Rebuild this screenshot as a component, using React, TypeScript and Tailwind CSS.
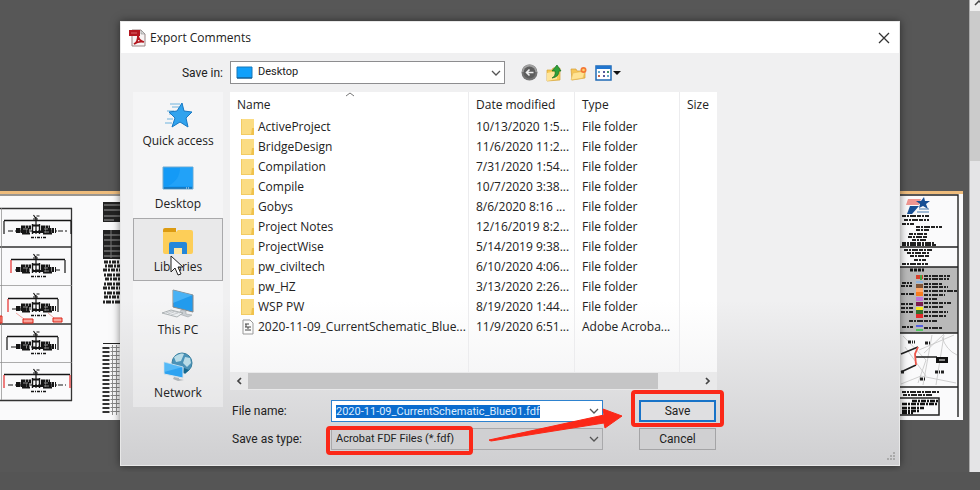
import { useEffect, useRef, useState } from "react";

const folders = [
  { name: "ActiveProject", date: "10/13/2020 1:5..." },
  { name: "BridgeDesign", date: "11/6/2020 11:2..." },
  { name: "Compilation", date: "7/31/2020 1:54..." },
  { name: "Compile", date: "10/7/2020 3:38..." },
  { name: "Gobys", date: "8/6/2020 8:16 ..." },
  { name: "Project Notes", date: "12/16/2019 8:2..." },
  { name: "ProjectWise", date: "5/14/2019 9:38..." },
  { name: "pw_civiltech", date: "6/10/2020 4:06..." },
  { name: "pw_HZ", date: "3/13/2020 2:26..." },
  { name: "WSP PW", date: "8/19/2020 1:44..." },
];

const places = [
  { name: "Quick access", icon: <QuickAccessIcon /> },
  { name: "Desktop", icon: <DesktopIcon /> },
  { name: "Libraries", icon: <LibrariesIcon /> },
  { name: "This PC", icon: <ThisPcIcon /> },
  { name: "Network", icon: <NetworkIcon /> },
];

function PdfIcon() {
  return (
    <svg width="18" height="18" viewBox="0 0 18 18" aria-hidden="true">
      <path d="M3 1h9l4 4v12H3z" fill="#f8f4f4" stroke="#9a8585" />
      <path d="M12 1v4h4z" fill="#d8d8d8" stroke="#8d8d8d" strokeWidth=".6" />
      <path d="M0 1h11v6H0z" fill="#b3171f" />
      <path d="M2 4h6" stroke="#d9696d" />
      <path d="M5 15c3-1 4-5 4-9 0 4 2 6 6 7-4-1-7 0-10 2z" fill="none" stroke="#b3171f" strokeWidth="1.8" />
    </svg>
  );
}

function QuickAccessIcon() {
  return (
    <svg width="30" height="28" viewBox="0 0 30 28" aria-hidden="true">
      <path d="M7 3h10M9 6h7M4 10h7M6 13h6M4 18h6M2 22h7" stroke="#6fb3de" strokeWidth="1" />
      <path d="M19 2l2 8 8 1-6 6 2 9-8-5-8 5 3-9-6-6 8-1z" fill="#31a3ee" stroke="#1678c4" strokeWidth="1" />
    </svg>
  );
}

function DesktopIcon() {
  return (
    <svg width="32" height="24" viewBox="0 0 32 24" aria-hidden="true">
      <path d="M1 1h30v22H1z" fill="#149af6" stroke="#70a9cf" />
      <path d="M18 1h13v19H6c8-4 12-10 12-19z" fill="#30aafa" opacity=".5" />
      <path d="M2 22h28" stroke="#155a91" />
      <path d="M24 22h4" stroke="#d7ebf8" strokeDasharray="1 1" />
    </svg>
  );
}

function LibrariesIcon() {
  return (
    <svg width="32" height="28" viewBox="0 0 32 28" aria-hidden="true">
      <path d="M1 3q0-2 2-2h11v5H1z" fill="#dc9b12" />
      <path d="M1 5h13l2-2h13q2 0 2 2v20q0 2-2 2H3q-2 0-2-2z" fill="#fdce58" />
      <path d="M7 27V17q0-2 2-2h14q2 0 2 2v10h-5v-6h-8v6z" fill="#2587da" />
      <path d="M12 21h8v6h-8z" fill="#ffe6a2" />
    </svg>
  );
}

function ThisPcIcon() {
  return (
    <svg width="34" height="30" viewBox="0 0 34 30" aria-hidden="true">
      <path d="M12 1l20 5v17l-20-5z" fill="#229bed" stroke="#888" />
      <path d="M12 1l20 5-20 8z" fill="#63c1fa" opacity=".6" />
      <path d="M20 21l5 1v3l6 1-4 2-9-3z" fill="#c9ced2" stroke="#979da1" strokeWidth=".5" />
      <path d="M1 24l9-3 12 3-6 4z" fill="#eceff1" stroke="#9da3a6" strokeWidth=".8" />
      <path d="M5 24l6-2 8 2M7 25l6-2M10 26l7-2" fill="none" stroke="#aeb2b5" strokeWidth=".6" />
    </svg>
  );
}

function NetworkIcon() {
  return (
    <svg width="32" height="30" viewBox="0 0 32 30" aria-hidden="true">
      <circle cx="20" cy="11" r="10" fill="#4b93b8" stroke="#377f9f" />
      <path d="M12 5q7-5 10-3l-3 7-5 1zM23 5l5 1 1 5-4 4-4-4z" fill="#b9dce7" />
      <path d="M22 16l5 2-4 4-2-2z" fill="#17678c" />
      <path d="M2 10l19 5v11L2 22z" fill="#2ea3f1" stroke="#d9e3e9" />
      <path d="M2 10l19 5-19 5z" fill="#70c8fa" opacity=".6" />
      <path d="M12 25l5 1v1l5 1-6 1-5-2z" fill="#afb4b8" />
    </svg>
  );
}

function FolderIcon() {
  return (
    <svg className="shrink-0" width="14" height="18" viewBox="0 0 14 18" aria-hidden="true">
      <path d="M0 1h13v16H0z" fill="#fbdc83" />
      <path d="M0 1h1v16H0zM0 16h13v1H0z" fill="#f2cb62" />
      <path d="M11 10h2v7h-3z" fill="#f0c24c" />
    </svg>
  );
}

function FdfIcon() {
  return (
    <svg className="shrink-0" width="14" height="16" viewBox="0 0 14 16" aria-hidden="true">
      <path d="M2 1h7l3 3v11H2z" fill="#fbfbfb" stroke="#999" />
      <path d="M4 5h4M5 5v3M4 8h6M7 8v2M4 11h6" stroke="#444" strokeWidth="1" />
    </svg>
  );
}

function Chevron() {
  return (
    <svg className="pointer-events-none absolute right-1 top-1/2 -translate-y-1/2" width="10" height="6" viewBox="0 0 10 6" aria-hidden="true">
      <path d="M1 1l4 4 4-4" fill="none" stroke="#555" strokeWidth="1.3" />
    </svg>
  );
}

function BackIcon() {
  return (
    <svg width="17" height="17" viewBox="0 0 17 17" aria-hidden="true">
      <circle cx="8.5" cy="8.5" r="8" fill="#757575" />
      <path d="M1 8a7.5 7.5 0 0 1 15 0z" fill="#a0a0a0" />
      <circle cx="8.5" cy="8.5" r="6" fill="#5e5e5e" />
      <path d="M12.5 8.500H5M8.500 5.500L5.500 8.500l3 3" fill="none" stroke="#f0f0f0" strokeWidth="1.6" />
    </svg>
  );
}

function UpIcon() {
  return (
    <svg width="16" height="18" viewBox="0 0 16 18" aria-hidden="true">
      <path d="M1 6h5l1-2h7v12L1 17z" fill="#f8ca55" stroke="#d5a436" strokeWidth=".7" />
      <path d="M1 9l10-2v8L1 17z" fill="#ffe59a" />
      <path d="M6 14q4-2 3-7H6l5-6 4 6h-2q0 6-7 7z" fill="#2fa13a" stroke="#187020" strokeWidth=".7" />
    </svg>
  );
}

function NewFolderIcon() {
  return (
    <svg width="17" height="16" viewBox="0 0 17 16" aria-hidden="true">
      <path d="M1 4h5l1 2h8v7L2 15z" fill="#f6c659" stroke="#d59d37" strokeWidth=".7" />
      <path d="M3 8l12-2-2 7-12 2z" fill="#ffe394" stroke="#e5b750" strokeWidth=".5" />
      <circle cx="13.5" cy="5" r="3" fill="#f47735" />
      <circle cx="13.5" cy="5" r="1.300" fill="#ffd36c" />
    </svg>
  );
}

function ViewIcon() {
  return (
    <svg width="26" height="16" viewBox="0 0 26 16" aria-hidden="true">
      <path d="M1 1h15v14H1z" fill="#fff" stroke="#1f69b5" strokeWidth="1.5" />
      <path d="M1 1h15v3H1z" fill="#2276cf" />
      <path d="M3 7h2M12 11h2" stroke="#69a9c9" strokeWidth="2" />
      <path d="M8 7h2M8 11h2" stroke="#555a9b" strokeWidth="2" />
      <path d="M12 7h2" stroke="#44946c" strokeWidth="2" />
      <path d="M3 11h2" stroke="#c6674c" strokeWidth="2" />
      <path d="M18 6h8l-4 4z" fill="#111" />
    </svg>
  );
}

type SectionProps = { y: number; left: number; right: number; redLeft?: boolean; redRight?: boolean };

// One roadway cross section of the plan sheet
function CrossSection({ y, left, right, redLeft, redRight }: SectionProps) {
  return (
    <g fill="none" stroke="#151515" transform={`translate(0 ${y})`}>
      <path d="M33.500 -6l2 3M36.500 -5h3M36 -4v17M33 -2h5" strokeWidth="1.200" />
      <path d={`M${left} -.5H${right}`} strokeWidth="1.300" />
      <path d={`M${left} 0v13`} stroke={redLeft ? "#e62a2a" : "#151515"} strokeWidth="1.200" />
      <path d={`M${right} 0v13`} stroke={redRight ? "#e62a2a" : "#151515"} strokeWidth="1.200" />
      <path d={`M${left + 4} 10h${right - left - 8}`} strokeWidth="1" strokeDasharray="5 2 2 1" />
      <path d="M16 9.500h14M41 9.500h15" strokeWidth="5" strokeDasharray="4 .5 6 .5 2 1" />
      <path d="M21 6.500h10M41 6.500h9" strokeWidth="4" strokeDasharray="4 .5 3 .5" />
      <path d="M22 12.500h8M43 12.500h9M33 4.500h7M32 11h9" strokeWidth="2" />
      <path d="M32.500 3v10M39.500 3v10" strokeWidth="1.400" />
      <path d="M23 8h5M44 8h4M44 11h5" stroke="#aaa" strokeWidth=".8" />
      <path d="M31 16.500h15" strokeWidth="1.500" strokeDasharray="3 1 1 1" />
    </g>
  );
}

function LeftSheet() {
  return (
    <svg className="shrink-0" width="120" height="226" viewBox="0 194 120 226" aria-hidden="true">
      <path d="M0 195H120" stroke="#3b3328" />
      <path d="M0 208.500H72M0 247H72M0 324H72M0 400.500H72M71.500 208V401" fill="none" stroke="#333" strokeWidth="1.300" />
      <path d="M0 285.500H72M0 362.500H72M1.500 208V400" stroke="#8a8a8a" strokeWidth=".7" />
      <CrossSection y={221} left={4} right={71} />
      <CrossSection y={260} left={11} right={65} redLeft />
      <CrossSection y={299} left={8} right={58} redLeft />
      <CrossSection y={337} left={7} right={58} />
      <CrossSection y={375} left={4} right={70} redLeft redRight />
      <g fill="#f8a39a" stroke="#dd2418">
        <path d="M0 316h2v7H0zM23 319h10v4H23zM53 318h9v4h-9z" />
        <path d="M16 313l8 6M48 313l6 5" strokeWidth=".4" />
      </g>
      <path d="M103 202h17v20h-17zM103 230h17v29h-17z" fill="#222" />
      <path d="M104 205h16M104 210h16M104 216h16M104 220h10M104 235h16M104 240h16M104 246h16M104 251h16M104 256h16" stroke="#999" />
      <path d="M111 230v28" stroke="#777" />
      <g stroke="#222">
        <path d="M104 262h16M103 270h17M105 279h15M103 288h17M104 297h16" strokeWidth="3" strokeDasharray="4 1 2 1" />
        <path d="M105 266h15M104 275h16M104 284h16M104 293h16M103 302h17" strokeWidth="3" strokeDasharray="2 1 5 1" />
      </g>
      <path d="M103 343.500h17" stroke="#222" />
      <path d="M106 347v67" stroke="#333" strokeWidth="7" strokeDasharray="2 2" />
      <path d="M112.500 345v70M116.500 345v70" stroke="#777" strokeWidth=".8" />
      <path d="M115 347v67" stroke="#888" strokeWidth="9" strokeDasharray="1 3" />
    </svg>
  );
}

const legend = [
  { color: "#d8402c", y: 277 },
  { color: "#805435", y: 286 },
  { color: "#ffa96a", y: 290 },
  { color: "#f97c1f", y: 294 },
  { color: "#c274d8", y: 299 },
  { color: "#7d1b4c", y: 304 },
  { color: "#f6e820", y: 309 },
  { color: "#326f2c", y: 312 },
  { color: "#e32c2c", y: 316 },
];

function RightSheet() {
  return (
    <svg className="shrink-0" width="63" height="226" viewBox="900 194 63 226" aria-hidden="true">
      <path d="M900 267h58v66h-58z" fill="#b9b9b9" />
      <path d="M900 195h58v222M900 247h58M900 267h58M900 333h58M900 387h58" fill="none" stroke="#222" strokeWidth="1.400" />
      <path d="M908 199h13l-2 6h-13z" fill="#ef9691" />
      <path d="M924 197l1 4h5l-4 3 2 5-5-3-4 2 1-4-4-3h5zM910 206h9l-7 8h-5z" fill="#174f94" />
      <path d="M919 209h10M917 212h12" stroke="#4479ad" />
      <g stroke="#222" strokeWidth="2" strokeDasharray="4 1 2 1 6 1">
        <path d="M902 216h27M904 220h25M902 224h12M916 227h26M916 230h13M909 234h18M908 237h20M912 240h15M902 243h32M902 245h34" />
        <path d="M904 250h28M907 253h22M910 256h19M914 260h12M902 264h26" />
        <path d="M924 276h26M924 279h25M924 284h18M924 287h24M924 291h33M924 295h21M924 299h13M924 303h27M924 307h20M924 312h24M924 316h23" />
        <path d="M902 283h10M901 286h11M901 294h13M901 304h12M901 308h12M901 312h12M909 321h28M902 327h11M924 328h18M902 392h38M903 395h29" />
      </g>
      <path d="M910 270h14" stroke="#111" strokeWidth="3" strokeDasharray="3 1" />
      {legend.map((item) => (
        <path key={item.y} d={`M916 ${item.y}h7`} stroke={item.color} strokeWidth="4" />
      ))}
      <path d="M921 275v5" stroke="#48a644" strokeWidth="2" />
      <path d="M916 282h7" stroke="#8fb4dd" strokeWidth="2" />
      <path d="M916 326h7" stroke="#3545f0" strokeWidth="1.500" />
      <path d="M916 330h7" stroke="#32c943" strokeWidth="1.500" />
      <path
        d="M903 336l23 24-8 23M944 334l-20 19M954 335l-35 15M932 335l-9 50M944 335l-8 50M901 384l20-8 35 7M942 337q4 13 15 18M905 347l21 29"
        fill="none"
        stroke="#c4c4c4"
        strokeWidth=".8"
      />
      <path d="M901 354l17-7M915 357h22M901 372l15-7" stroke="#222" strokeWidth="1.500" />
      <path d="M918 347l-3 7 1 11" fill="none" stroke="#ee5449" strokeWidth="1.800" />
      <path d="M936 357h12v6h-12z" fill="#111" />
      <path d="M939 360h6" stroke="#fff" />
      <path d="M908 342h7M925 343h6M935 372h9M920 379h6M901 372h4" stroke="#222" strokeWidth="3" strokeDasharray="3 1 1 1" />
      <path d="M900 398h39v17h-39" fill="none" stroke="#222" strokeWidth="1.500" />
      <path d="M912 401h26M902 404h35M902 408h22M902 411h18M902 413h11" stroke="#111" strokeWidth="2.500" strokeDasharray="5 1 2 1" />
    </svg>
  );
}

function Backdrop() {
  return (
    <div className="absolute left-0 right-[6px] top-[191px] border-t-[3px] border-[#eebc7c] bg-[#fafafb]">
      <div className="flex justify-between">
        <LeftSheet />
        <RightSheet />
      </div>
    </div>
  );
}

function Places() {
  const [active, setActive] = useState("Libraries");

  return (
    <nav className="self-start bg-white/35 font-['Open_Sans',sans-serif]">
      {places.map((place) => (
        <button
          key={place.name}
          type="button"
          onClick={() => setActive(place.name)}
          className={`relative flex h-[63px] w-full flex-col items-center border text-xs ${
            active === place.name ? "border-[#a9a9ab] bg-[#e9e9ea]" : "border-transparent"
          }`}
        >
          <span className="flex h-10 items-center pt-1">{place.icon}</span>
          <span className="leading-4">{place.name}</span>
          {place.name === "Libraries" && (
            <svg className="absolute left-9 top-9" width="14" height="22" viewBox="0 0 14 22" aria-hidden="true">
              <path d="M1 1v16l4-4 3 7 3-1-3-7h5z" fill="#fff" stroke="#222" />
            </svg>
          )}
        </button>
      ))}
    </nav>
  );
}

function FileList() {
  return (
    <div className="bg-gradient-to-b from-white from-70% to-[#f4f4f5] font-['Open_Sans',sans-serif]">
      <div className="relative h-[280px]">
        {/* column rules run below the last row */}
        <div className="absolute inset-0 grid grid-cols-[239px_106px_105px_1fr]">
          <span className="border-r border-[#ececee]"></span>
          <span className="border-r border-[#ececee]"></span>
          <span className="border-r border-[#ececee]"></span>
        </div>
        <svg className="absolute left-[115px] top-0" width="10" height="5" viewBox="0 0 10 5" aria-hidden="true">
          <path d="M1 4l4-3 4 3" fill="none" stroke="#777" />
        </svg>
        <table className="relative w-full table-fixed text-left text-xs whitespace-nowrap">
          <colgroup>
            <col className="w-[239px]" />
            <col className="w-[106px]" />
            <col className="w-[105px]" />
            <col />
          </colgroup>
          <thead>
            <tr className="h-[25px]">
              <th className="pl-[7px] font-normal">Name</th>
              <th className="pl-[7px] font-normal">Date modified</th>
              <th className="pl-[7px] font-normal">Type</th>
              <th className="pl-[7px] font-normal">Size</th>
            </tr>
          </thead>
          <tbody>
            {folders.map((folder) => (
              <tr key={folder.name} className="h-5">
                <td className="pl-[11px]">
                  <span className="flex items-center gap-[3px]">
                    <FolderIcon />
                    {folder.name}
                  </span>
                </td>
                <td className="pl-[7px]">{folder.date}</td>
                <td className="pl-[7px]">File folder</td>
                <td></td>
              </tr>
            ))}
            <tr className="h-5">
              <td className="pl-[11px]">
                <span className="flex items-center gap-[3px]">
                  <FdfIcon />
                  2020-11-09_CurrentSchematic_Blue...
                </span>
              </td>
              <td className="pl-[7px]">11/9/2020 6:51...</td>
              <td className="pl-[7px]">Adobe Acroba...</td>
              <td></td>
            </tr>
          </tbody>
        </table>
      </div>
      <div className="flex h-[18px] items-center bg-[#e9e9ea]">
        <button type="button" aria-label="Scroll left" className="flex w-[18px] justify-center">
          <svg width="6" height="8" viewBox="0 0 6 8" aria-hidden="true">
            <path d="M5 1L2 4l3 3" fill="none" stroke="#444" strokeWidth="1.700" />
          </svg>
        </button>
        <div className="flex h-4 grow">
          <div className="w-[91%] bg-[#c5c5c6]"></div>
        </div>
        <button type="button" aria-label="Scroll right" className="flex w-[18px] justify-center">
          <svg width="6" height="8" viewBox="0 0 6 8" aria-hidden="true">
            <path d="M1 1l3 3-3 3" fill="none" stroke="#444" strokeWidth="1.700" />
          </svg>
        </button>
      </div>
    </div>
  );
}

function SaveForm() {
  const fileRef = useRef<HTMLInputElement>(null);

  useEffect(() => {
    fileRef.current?.focus();
    fileRef.current?.select();
  }, []);

  return (
    <form onSubmit={(e) => e.preventDefault()} className="relative mt-[10px] grid grid-cols-[99px_272px_113px] items-center gap-y-[6px] pl-[2px]">
      <label htmlFor="file-name">File name:</label>
      <div className="relative">
        <input
          id="file-name"
          ref={fileRef}
          defaultValue="2020-11-09_CurrentSchematic_Blue01.fdf"
          className="h-[22px] w-full border border-[#2d82cf] bg-white pl-1 pr-5 text-[11px] outline-none selection:bg-[#0b6cce] selection:text-[#dcecff]"
        />
        <Chevron />
      </div>
      <div className="relative ml-9">
        <button type="submit" className="h-[22px] w-full border-2 border-[#1873c8] bg-[#dfdfe1]">Save</button>
        <span className="pointer-events-none absolute -inset-x-2 -bottom-[5px] -top-[10px] rounded border-4 border-[#fb2818]"></span>
      </div>

      <label htmlFor="file-type">Save as type:</label>
      <div className="relative">
        <select id="file-type" className="h-[22px] w-full appearance-none border border-[#a9a9ab] bg-[#d0d0d2] pl-1 pr-5 text-[11px]">
          <option>Acrobat FDF Files (*.fdf)</option>
        </select>
        <Chevron />
        <span className="pointer-events-none absolute -bottom-[5px] -left-[5px] -top-[2px] w-[147px] rounded border-4 border-[#fb2818]"></span>
      </div>
      <button type="button" className="ml-9 h-[22px] border border-[#a4a4a6] bg-[#d0d0d2]">Cancel</button>

      {/* callout arrow towards Save */}
      <svg className="pointer-events-none absolute left-[259px] top-[5px]" width="136" height="38" viewBox="0 0 136 38" aria-hidden="true">
        <path d="M0 35L115 10l-1-6 19 7-17 12-1-5L2 36z" fill="#fb2818" stroke="#fb2818" strokeLinejoin="round" />
      </svg>
    </form>
  );
}

function ExportDialog() {
  return (
    <section
      role="dialog"
      aria-label="Export Comments"
      className="relative border border-[#e8e8e8] bg-[#f0f0f1] text-xs shadow-[0_0_8px_rgba(0,0,0,0.5)]"
    >
      <header className="flex h-[31px] items-center bg-white pl-2 pr-[9px]">
        <PdfIcon />
        <h1 className="ml-[3px] font-['Open_Sans',sans-serif] text-xs">Export Comments</h1>
        <button type="button" aria-label="Close" className="ml-auto">
          <svg width="12" height="12" viewBox="0 0 12 12" aria-hidden="true">
            <path d="M1 1l10 10M11 1L1 11" stroke="#333" strokeWidth="1.300" />
          </svg>
        </button>
      </header>

      <div className="grid grid-cols-[90px_1fr] gap-x-[7px] gap-y-2 bg-gradient-to-b from-[#f0f0f1] from-60% to-[#cfcfd1] pb-[15px] pl-3 pr-[182px] pt-2">
        <label htmlFor="save-in" className="self-center text-right">Save in:</label>
        <div className="flex items-center">
          <div className="relative w-[275px]">
            <svg className="pointer-events-none absolute left-[6px] top-[5px]" width="17" height="13" viewBox="0 0 17 13" aria-hidden="true">
              <path d="M1 1h15v11H1z" fill="#10a0fb" stroke="#1678ba" />
              <path d="M1 12h15" stroke="#145382" />
            </svg>
            <select id="save-in" className="h-[23px] w-full appearance-none border border-[#8d8d8f] bg-white pl-[27px] pr-5 text-[11px]">
              <option>Desktop</option>
            </select>
            <Chevron />
          </div>
          <div className="ml-4 flex items-center gap-2">
            <button type="button" aria-label="Go back"><BackIcon /></button>
            <button type="button" aria-label="Up one level"><UpIcon /></button>
            <button type="button" aria-label="New folder"><NewFolderIcon /></button>
            <button type="button" aria-label="View menu"><ViewIcon /></button>
          </div>
        </div>

        <Places />
        <div>
          <FileList />
          <SaveForm />
        </div>
      </div>
      <svg className="absolute bottom-1 right-1" width="9" height="9" viewBox="0 0 9 9" aria-hidden="true">
        <path d="M7 1h2M4 4h2M7 4h2M1 7h2M4 7h2M7 7h2" stroke="#aaa" strokeWidth="2" />
      </svg>
    </section>
  );
}

export default function App() {
  return (
    <div className="flex min-h-screen flex-col bg-[#555] font-['Roboto','Liberation_Sans',sans-serif] text-[#222]">
      <div className="flex">
        <main className="relative min-w-0 grow overflow-hidden bg-[#575757] pb-[6px] pl-[120px] pr-[69px] pt-[21px]">
          <Backdrop />
          <ExportDialog />
        </main>
        <div className="flex w-[11px] shrink-0 flex-col border-l border-[#aaa] bg-[#e4e4e6]">
          <div className="flex h-[11px] justify-end bg-[#efefef]">
            <svg width="6" height="7" viewBox="0 0 6 7" aria-hidden="true">
              <path d="M1 5l4-4 4 4" fill="none" stroke="#444" strokeWidth="1.500" />
            </svg>
          </div>
          <div className="h-[150px] bg-[#cbcbcb]"></div>
        </div>
      </div>
    </div>
  );
}
